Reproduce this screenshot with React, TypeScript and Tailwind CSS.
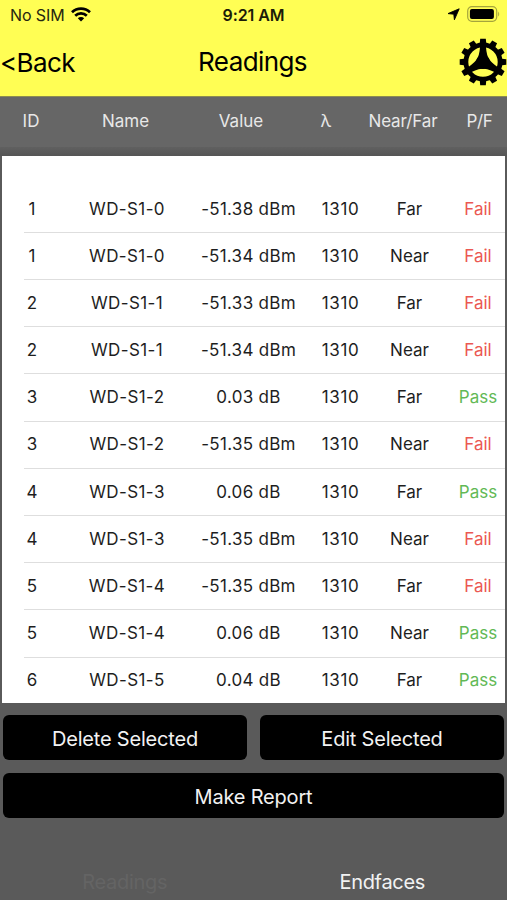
type Reading = {
  id: number;
  name: string;
  value: string;
  side: "Near" | "Far";
  pass: boolean;
};

const readings: Reading[] = [
  { id: 1, name: "WD-S1-0", value: "-51.38 dBm", side: "Far", pass: false },
  { id: 1, name: "WD-S1-0", value: "-51.34 dBm", side: "Near", pass: false },
  { id: 2, name: "WD-S1-1", value: "-51.33 dBm", side: "Far", pass: false },
  { id: 2, name: "WD-S1-1", value: "-51.34 dBm", side: "Near", pass: false },
  { id: 3, name: "WD-S1-2", value: "0.03 dB", side: "Far", pass: true },
  { id: 3, name: "WD-S1-2", value: "-51.35 dBm", side: "Near", pass: false },
  { id: 4, name: "WD-S1-3", value: "0.06 dB", side: "Far", pass: true },
  { id: 4, name: "WD-S1-3", value: "-51.35 dBm", side: "Near", pass: false },
  { id: 5, name: "WD-S1-4", value: "-51.35 dBm", side: "Far", pass: false },
  { id: 5, name: "WD-S1-4", value: "0.06 dB", side: "Near", pass: true },
  { id: 6, name: "WD-S1-5", value: "0.04 dB", side: "Far", pass: true },
];

const teeth = [0, 30, 60, 90, 120, 150, 180, 210, 240, 270, 300, 330];

function GearIcon() {
  return (
    <svg viewBox="-24 -24 48 48" className="h-12 w-12" role="img" aria-label="Settings">
      {teeth.map((angle) => (
        <path key={angle} d="M-3.4 -17 L-2.8 -23.3 H2.8 L3.4 -17 Z" transform={`rotate(${angle})`} />
      ))}
      <circle r="17.1" fill="none" stroke="black" strokeWidth="4.8" />
      {/* Hub and tapered spokes */}
      <circle r="7" />
      {[0, 120, 240].map((angle) => (
        <path
          key={angle}
          d="M-6.6 -1.5 C-4.6 -5 -3.4 -9 -2.9 -15.5 H2.9 C3.4 -9 4.6 -5 6.6 -1.5 Z"
          transform={`rotate(${angle})`}
        />
      ))}
    </svg>
  );
}

function StatusBar() {
  return (
    <div className="grid h-[30px] grid-cols-3 items-center text-[16px] tracking-[-0.1px]">
      <div className="flex items-center gap-[6px] pl-[10px] text-[#26260f]">
        <span>No SIM</span>
        <svg viewBox="0 0 20 15" className="-mt-px h-[15px] w-5" fill="none" stroke="black" strokeWidth="2.7">
          <path d="M1 5.3 A13 13 0 0 1 19 5.3" />
          <path d="M4.2 8.8 A8.3 8.3 0 0 1 15.8 8.8" />
          <path d="M6.8 11.3 A4.6 4.6 0 0 1 13.2 11.3 L10 14.5 Z" fill="black" stroke="none" />
        </svg>
      </div>
      <span className="text-center font-semibold text-[#1c1c08]">9:21 AM</span>
      <div className="-mt-[2px] flex items-center justify-end gap-[7px] pr-[6px]">
        <svg viewBox="0 0 13 13" className="mt-px h-[13px] w-[13px]">
          <path
            d="M12.2 0.8 L7.4 11.8 L6.8 6.2 L1 5.6 Z"
            stroke="black"
            strokeWidth="0.9"
            strokeLinejoin="round"
          />
        </svg>
        <svg viewBox="0 0 34 16" className="h-4 w-[34px]">
          <rect x="0.7" y="0.7" width="29" height="14.6" rx="4.2" fill="none" stroke="#a5a53c" strokeWidth="1.2" />
          <rect x="2.9" y="2.9" width="24" height="10.2" rx="2" />
          <path d="M31.2 5.4 Q33.2 8 31.2 10.6 Z" fill="#a5a53c" />
        </svg>
      </div>
    </div>
  );
}

function ReadingRow({ reading, last }: { reading: Reading; last: boolean }) {
  return (
    <li className="relative grid h-[47.2px] grid-cols-[64px_122px_120px_64px_74px_59px] items-center text-center">
      <span className="pr-1">{reading.id}</span>
      <span className="tracking-[0.4px]">{reading.name}</span>
      <span className="pl-px tracking-[0.3px]">{reading.value}</span>
      <span className="pl-px tracking-[0.6px]">1310</span>
      <span className="pl-px">{reading.side}</span>
      <span className={reading.pass ? "pl-[5px] text-[#62b956]" : "pl-[5px] text-[#eb5852]"}>
        {reading.pass ? "Pass" : "Fail"}
      </span>
      {!last && <span className="absolute right-0 bottom-0 left-[22px] h-px bg-[#dedede]" />}
    </li>
  );
}

export default function App() {
  return (
    <div className="flex h-[900px] w-[507px] flex-col overflow-hidden bg-[#5a5a5a] font-['Inter','Liberation_Sans',sans-serif]">
      <header className="h-[97px] shrink-0 border-b border-[#8c8c50] bg-[#fffe54]">
        <StatusBar />
        <div className="grid h-16 grid-cols-3 items-center text-[26px] tracking-[-0.6px]">
          <button className="text-left">&lt;Back</button>
          <h1 className="pr-[2px] pb-px text-center">Readings</h1>
          <button className="justify-self-end">
            <GearIcon />
          </button>
        </div>
      </header>

      <div className="grid h-[50px] shrink-0 grid-cols-[62px_127px_104px_66px_88px_60px] items-center bg-[#666] text-center text-[17px] text-[#e8e8e8]">
        <span>ID</span>
        <span>Name</span>
        <span>Value</span>
        <span>λ</span>
        <span className="tracking-[-0.1px]">Near/Far</span>
        <span className="pl-[5px] tracking-[-0.3px]">P/F</span>
      </div>
      <div className="h-[9px] shrink-0 bg-linear-to-b from-[#606060] to-[#555]" />

      <ul className="mx-0.5 h-[547px] shrink-0 overflow-hidden bg-white pt-[29.7px] text-[17px] text-[#1e1e1e]">
        {readings.map((reading, i) => (
          <ReadingRow key={i} reading={reading} last={i === readings.length - 1} />
        ))}
      </ul>

      <div className="grid grid-cols-2 gap-x-[13px] gap-y-[13px] px-[3px] pt-3 text-[20px] tracking-[-0.2px] text-[#f2f2f2]">
        <button className="h-[45px] rounded-md bg-black pt-0.5">Delete Selected</button>
        <button className="h-[45px] rounded-md bg-black pt-0.5">Edit Selected</button>
        <button className="col-span-2 h-[45px] rounded-md bg-black pt-0.5">Make Report</button>
      </div>

      <nav className="mt-auto grid h-9 grid-cols-2 items-center text-center text-[20px] tracking-[-0.3px]">
        <span className="pr-1 text-[#646464]">Readings</span>
        <span className="pl-1 text-[#f2f2f2]">Endfaces</span>
      </nav>
    </div>
  );
}
